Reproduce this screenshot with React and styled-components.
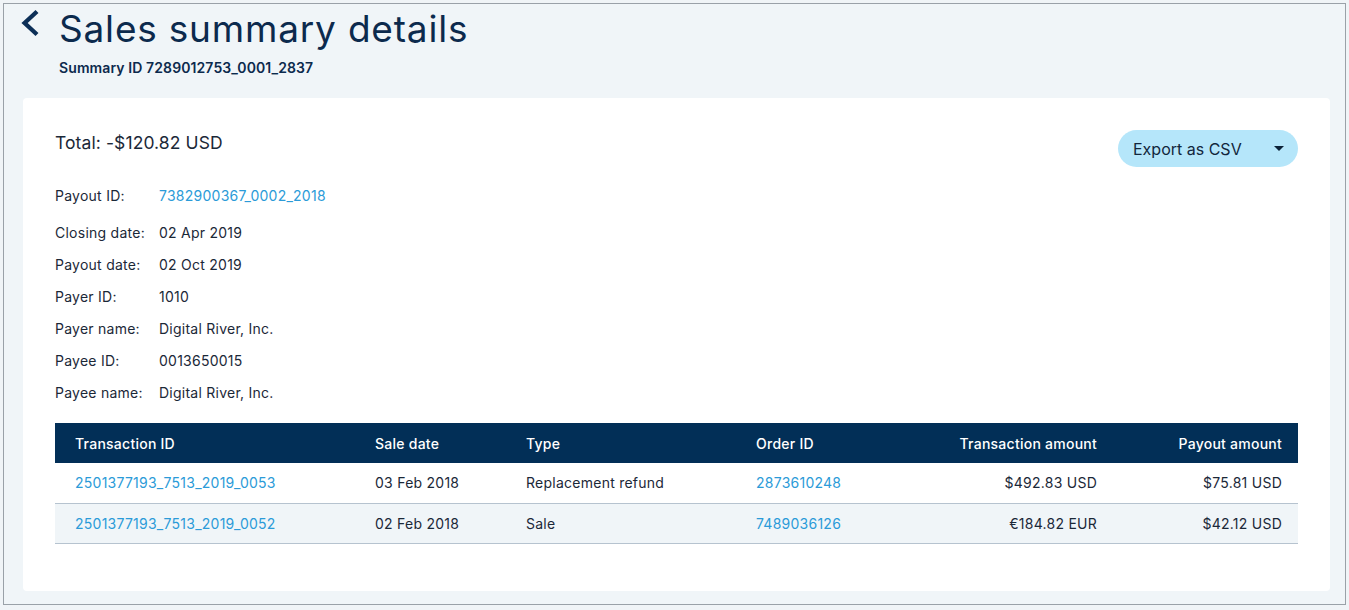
import React from "react";
import styled, { createGlobalStyle } from "styled-components";

const GlobalStyle = createGlobalStyle`
  html, body {
    margin: 0;
    padding: 0;
    background: #f0f4f7;
    font-family: Inter, "Noto Sans", "Liberation Sans", sans-serif;
    color: #1b2838;
  }
`;

const Frame = styled.div`
  margin: 3px;
  height: 602px;
  box-sizing: border-box;
  border: 1px solid #9aa1a8;
  background: #f0f5f8;
  padding: 0 15px 0 19px;
  display: flex;
  flex-direction: column;
`;

const Header = styled.div`
  height: 94px;
  box-sizing: border-box;
  padding-top: 2px;
`;

const TitleRow = styled.div`
  display: flex;
  align-items: flex-start;
  gap: 19px;
`;

const BackButton = styled.button`
  border: 0;
  background: none;
  padding: 0;
  margin: 3px 0 0 -2px;
  width: 19px;
  height: 28px;
  display: flex;
  cursor: pointer;
`;

const Title = styled.h1`
  margin: 0;
  font-size: 37px;
  font-weight: 400;
  color: #0c2a4d;
  letter-spacing: 0.8px;
  line-height: 46px;
`;

const SubTitle = styled.div`
  margin: 7px 0 0 36px;
  font-size: 14px;
  font-weight: 600;
  color: #0c2a4d;
  letter-spacing: 0.1px;
`;

const Card = styled.div`
  background: #fff;
  border-radius: 4px;
  height: 493px;
  box-sizing: border-box;
  padding: 32px 32px 0 32px;
`;

const TopRow = styled.div`
  display: flex;
  justify-content: space-between;
  align-items: flex-start;
`;

const Total = styled.div`
  font-size: 17.5px;
  color: #1b2838;
  margin-top: 2px;
  letter-spacing: 0.1px;
`;

const ExportButton = styled.button`
  display: flex;
  align-items: center;
  justify-content: space-between;
  width: 180px;
  height: 37px;
  padding: 0 14px 0 15px;
  border: 0;
  border-radius: 19px;
  background: #b5e6fa;
  color: #12263d;
  font-family: inherit;
  font-size: 16px;
  cursor: pointer;
`;

const Details = styled.div`
  margin-top: 12px;
  display: flex;
  flex-direction: column;
`;

const DetailRow = styled.div`
  display: flex;
  align-items: center;
  height: 32px;
  font-size: 14px;
  letter-spacing: 0.25px;
  margin-bottom: ${(p) => (p.$first ? "5px" : "0")};
`;

const Label = styled.span`
  min-width: 104px;
  color: #1b2838;
`;

const Value = styled.span`
  color: ${(p) => (p.$link ? "#2b9bd8" : "#1b2838")};
`;

const Table = styled.table`
  width: 100%;
  margin-top: 15px;
  border-collapse: collapse;
  font-size: 14px;
  letter-spacing: 0.25px;
`;

const Th = styled.th`
  background: #022f57;
  color: #fff;
  font-weight: 500;
  height: 40px;
  padding: 0 ${(p) => p.$pr || "0"} 0 ${(p) => p.$pl || "0"};
  text-align: ${(p) => (p.$right ? "right" : "left")};
  width: ${(p) => p.$w || "auto"};
`;

const Tr = styled.tr`
  background: ${(p) => (p.$alt ? "#f0f5f8" : "#fff")};
  border-bottom: 1px solid #b6c3cf;
`;

const Td = styled.td`
  height: 39.5px;
  padding: 0 ${(p) => p.$pr || "0"} 0 ${(p) => p.$pl || "0"};
  text-align: ${(p) => (p.$right ? "right" : "left")};
  color: ${(p) => (p.$link ? "#2b9bd8" : "#1b2838")};
`;

const details = [
  ["Closing date:", "02 Apr 2019"],
  ["Payout date:", "02 Oct 2019"],
  ["Payer ID:", "1010"],
  ["Payer name:", "Digital River, Inc."],
  ["Payee ID:", "0013650015"],
  ["Payee name:", "Digital River, Inc."],
];

const rows = [
  ["2501377193_7513_2019_0053", "03 Feb 2018", "Replacement refund", "2873610248", "$492.83 USD", "$75.81 USD"],
  ["2501377193_7513_2019_0052", "02 Feb 2018", "Sale", "7489036126", "€184.82 EUR", "$42.12 USD"],
];

export default function App() {
  return (
    <>
      <GlobalStyle />
      <Frame>
        <Header>
          <TitleRow>
            <BackButton aria-label="Back">
              <svg width="19" height="28" viewBox="0 0 19 28">
                <path d="M16 2.5 L3.6 14 L16 25.5" fill="none" stroke="#0c2f57" strokeWidth="4.3" />
              </svg>
            </BackButton>
            <Title>Sales summary details</Title>
          </TitleRow>
          <SubTitle>Summary ID 7289012753_0001_2837</SubTitle>
        </Header>
        <Card>
          <TopRow>
            <Total>Total: -$120.82 USD</Total>
            <ExportButton>
              Export as CSV
              <svg width="10" height="6" viewBox="0 0 10 6">
                <path d="M0 0 H10 L5 5 Z" fill="#0c2238" />
              </svg>
            </ExportButton>
          </TopRow>
          <Details>
            <DetailRow $first>
              <Label>Payout ID:</Label>
              <Value $link>7382900367_0002_2018</Value>
            </DetailRow>
            {details.map(([l, v]) => (
              <DetailRow key={l}>
                <Label>{l}</Label>
                <Value>{v}</Value>
              </DetailRow>
            ))}
          </Details>
          <Table>
            <thead>
              <tr>
                <Th $pl="20px" $w="300px">Transaction ID</Th>
                <Th $w="151px">Sale date</Th>
                <Th $w="230px">Type</Th>
                <Th>Order ID</Th>
                <Th $right>Transaction amount</Th>
                <Th $right $pr="16px" $w="185px">Payout amount</Th>
              </tr>
            </thead>
            <tbody>
              {rows.map((r, i) => (
                <Tr key={r[0]} $alt={i % 2 === 1}>
                  <Td $pl="20px" $link>{r[0]}</Td>
                  <Td>{r[1]}</Td>
                  <Td>{r[2]}</Td>
                  <Td $link>{r[3]}</Td>
                  <Td $right>{r[4]}</Td>
                  <Td $right $pr="16px">{r[5]}</Td>
                </Tr>
              ))}
            </tbody>
          </Table>
        </Card>
      </Frame>
    </>
  );
}
